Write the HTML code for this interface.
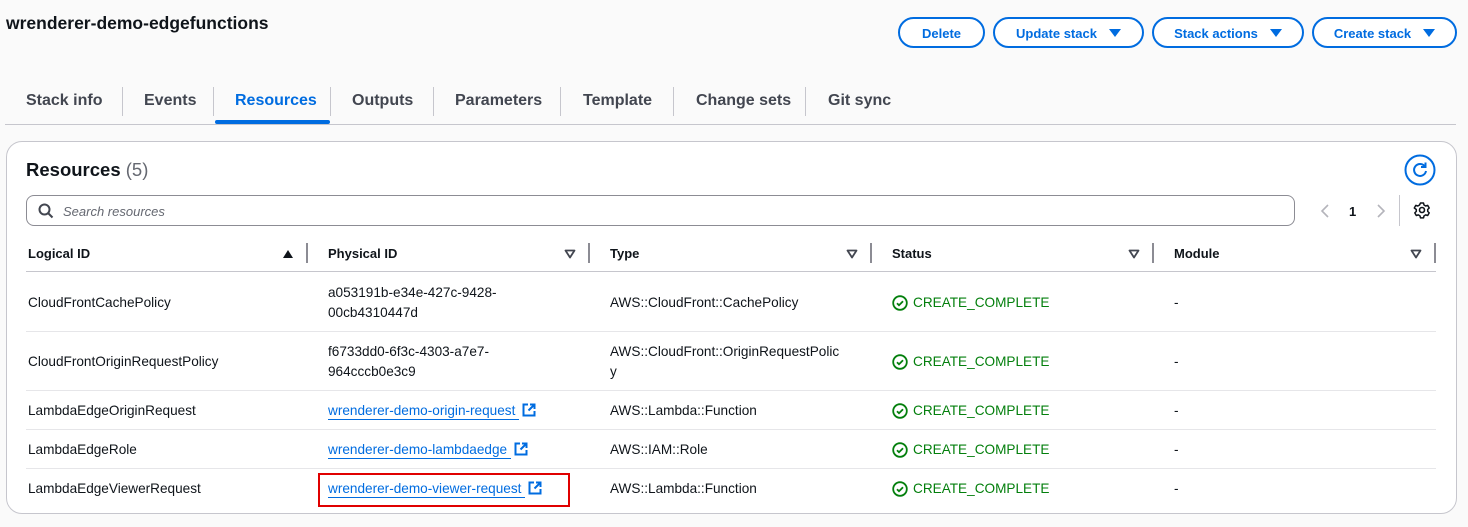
<!DOCTYPE html>
<html><head><meta charset="utf-8"><style>
*{box-sizing:border-box;margin:0;padding:0}
body{width:1468px;height:527px;background:#fafafa;font-family:"Liberation Sans",sans-serif;color:#0f141a;position:relative;overflow:hidden}
.a{position:absolute;white-space:nowrap}
.btn{position:absolute;top:17px;height:31px;border:2px solid #006ce0;border-radius:16px;color:#006ce0;font-weight:bold;font-size:13px;display:flex;align-items:center;justify-content:center;gap:12px;background:#fff;padding-top:1px}
.tri{width:0;height:0;border-left:6px solid transparent;border-right:6px solid transparent;border-top:8px solid #006ce0}
.tab{position:absolute;top:92px;font-size:16px;font-weight:bold;color:#424650}
.tsep{position:absolute;top:87px;width:1px;height:29px;background:#c6c6cd}
.th{position:absolute;top:246px;font-size:13px;font-weight:bold;color:#0f141a}
.hsep{position:absolute;top:243px;width:2px;height:20px;background:#8c8c94}
.sort{position:absolute;top:249px}
.td{position:absolute;font-size:13.6px;color:#0f141a;line-height:20px}
.rl{position:absolute;left:26px;width:1410px;height:1px;background:#e6e6e9}
.lnk{color:#006ce0;border-bottom:1px solid #006ce0;padding-bottom:1px}
.ok{color:#037f0c;display:flex;align-items:center;gap:5px}
.ext{vertical-align:-2px;margin-left:3px}
</style></head><body>
<div class="a" style="left:6px;top:13px;font-size:17.5px;font-weight:bold">wrenderer-demo-edgefunctions</div>
<div class="btn" style="left:898px;width:87px">Delete</div>
<div class="btn" style="left:993px;width:151px">Update stack<span class="tri"></span></div>
<div class="btn" style="left:1152px;width:152px">Stack actions<span class="tri"></span></div>
<div class="btn" style="left:1312px;width:145px">Create stack<span class="tri"></span></div>

<div class="tab" style="left:26px">Stack info</div>
<div class="tsep" style="left:122px"></div>
<div class="tab" style="left:144px">Events</div>
<div class="tsep" style="left:213px"></div>
<div class="tab" style="left:235px;color:#006ce0">Resources</div>
<div class="tsep" style="left:330px"></div>
<div class="tab" style="left:352px">Outputs</div>
<div class="tsep" style="left:433px"></div>
<div class="tab" style="left:455px">Parameters</div>
<div class="tsep" style="left:560px"></div>
<div class="tab" style="left:583px">Template</div>
<div class="tsep" style="left:673px"></div>
<div class="tab" style="left:696px">Change sets</div>
<div class="tsep" style="left:805px"></div>
<div class="tab" style="left:828px">Git sync</div>
<div class="a" style="left:215px;top:120px;width:115px;height:4px;border-radius:2px;background:#006ce0"></div>
<div class="a" style="left:5px;top:124px;width:1451px;height:1px;background:#c6c6cd"></div>

<div class="a" style="left:6px;top:141px;width:1451px;height:373px;background:#fff;border:1px solid #c6c6cd;border-radius:16px"></div>
<div class="a" style="left:26px;top:159px;font-size:18.5px;font-weight:bold">Resources <span style="font-weight:normal;color:#656871">(5)</span></div>
<svg class="a" style="left:1404px;top:154px" width="32" height="32" viewBox="0 0 32 32"><circle cx="16" cy="16" r="14.5" fill="none" stroke="#006ce0" stroke-width="2"/><path d="M21 12.5A6 6 0 1 0 22 17" fill="none" stroke="#006ce0" stroke-width="2"/><path d="M21.5 8.5v4.5h-4.5" fill="none" stroke="#006ce0" stroke-width="2"/></svg>
<div class="a" style="left:26px;top:195px;width:1269px;height:31px;border:1px solid #8c8c94;border-radius:8px;background:#fff"></div>
<svg class="a" style="left:38px;top:203px" width="16" height="16" viewBox="0 0 16 16"><circle cx="6.5" cy="6.5" r="5" fill="none" stroke="#424650" stroke-width="2"/><path d="M10 10l4.5 4.5" stroke="#424650" stroke-width="2"/></svg>
<div class="a" style="left:63px;top:204px;font-size:13px;font-style:italic;color:#656871">Search resources</div>
<svg class="a" style="left:1319px;top:203px" width="12" height="16"><path d="M9 2L3 8l6 6" fill="none" stroke="#b4b4bb" stroke-width="1.6"/></svg>
<div class="a" style="left:1349px;top:204px;font-size:13px;font-weight:bold">1</div>
<svg class="a" style="left:1375px;top:203px" width="12" height="16"><path d="M3 2l6 6-6 6" fill="none" stroke="#b4b4bb" stroke-width="1.6"/></svg>
<div class="a" style="left:1399px;top:195px;width:1px;height:31px;background:#c6c6cd"></div>
<svg class="a" style="left:1413px;top:201px" width="18" height="18" viewBox="0 0 18 18"><circle cx="9" cy="9" r="2.5" fill="none" stroke="#0f141a" stroke-width="1.6"/><path d="M7.5 2h3l.5 2 1.7 1 2-.6 1.5 2.6-1.5 1.5v1.9l1.5 1.5-1.5 2.6-2-.6-1.7 1-.5 2h-3l-.5-2-1.7-1-2 .6-1.5-2.6 1.5-1.5V8.5L1.3 7 2.8 4.4l2 .6L6.5 4z" fill="none" stroke="#0f141a" stroke-width="1.5" stroke-linejoin="round"/></svg>

<div class="th" style="left:28px">Logical ID</div>
<svg class="sort" style="left:282px" width="12" height="10"><path d="M1 9h10L6 1z" fill="#0f141a"/></svg>
<div class="hsep" style="left:306px"></div>
<div class="th" style="left:328px">Physical ID</div>
<svg class="sort" style="left:564px" width="12" height="10"><path d="M1.5 1.5h9L6 8.5z" fill="none" stroke="#424650" stroke-width="1.8" stroke-linejoin="round"/></svg>
<div class="hsep" style="left:588px"></div>
<div class="th" style="left:610px">Type</div>
<svg class="sort" style="left:846px" width="12" height="10"><path d="M1.5 1.5h9L6 8.5z" fill="none" stroke="#424650" stroke-width="1.8" stroke-linejoin="round"/></svg>
<div class="hsep" style="left:870px"></div>
<div class="th" style="left:892px">Status</div>
<svg class="sort" style="left:1128px" width="12" height="10"><path d="M1.5 1.5h9L6 8.5z" fill="none" stroke="#424650" stroke-width="1.8" stroke-linejoin="round"/></svg>
<div class="hsep" style="left:1152px"></div>
<div class="th" style="left:1174px">Module</div>
<svg class="sort" style="left:1410px" width="12" height="10"><path d="M1.5 1.5h9L6 8.5z" fill="none" stroke="#424650" stroke-width="1.8" stroke-linejoin="round"/></svg>
<div class="hsep" style="left:1434px"></div>
<div class="rl" style="top:271px;background:#c6c6cd"></div>

<div class="td" style="left:28px;top:293px">CloudFrontCachePolicy</div>
<div class="td" style="left:328px;top:283px">a053191b-e34e-427c-9428-<br>00cb4310447d</div>
<div class="td" style="left:610px;top:293px">AWS::CloudFront::CachePolicy</div>
<div class="td ok" style="left:892px;top:293px"><svg width="16" height="16" viewBox="0 0 16 16"><circle cx="8" cy="8" r="6.8" fill="none" stroke="#037f0c" stroke-width="1.8"/><path d="M5 8.2l2 2 4-4" fill="none" stroke="#037f0c" stroke-width="1.8"/></svg>CREATE_COMPLETE</div>
<div class="td" style="left:1174px;top:293px">-</div>
<div class="rl" style="top:331px"></div>

<div class="td" style="left:28px;top:352px">CloudFrontOriginRequestPolicy</div>
<div class="td" style="left:328px;top:342px">f6733dd0-6f3c-4303-a7e7-<br>964cccb0e3c9</div>
<div class="td" style="left:610px;top:342px">AWS::CloudFront::OriginRequestPolic<br>y</div>
<div class="td ok" style="left:892px;top:352px"><svg width="16" height="16" viewBox="0 0 16 16"><circle cx="8" cy="8" r="6.8" fill="none" stroke="#037f0c" stroke-width="1.8"/><path d="M5 8.2l2 2 4-4" fill="none" stroke="#037f0c" stroke-width="1.8"/></svg>CREATE_COMPLETE</div>
<div class="td" style="left:1174px;top:352px">-</div>
<div class="rl" style="top:390px"></div>

<div class="td" style="left:28px;top:401px">LambdaEdgeOriginRequest</div>
<div class="td" style="left:328px;top:401px"><span class="lnk">wrenderer-demo-origin-request </span><svg class="ext" width="14" height="14" viewBox="0 0 14 14"><path d="M6 1.5H1.5v11h11V8M8 1.5h4.5V6M12.5 1.5L6.5 7.5" fill="none" stroke="#006ce0" stroke-width="2"/></svg></div>
<div class="td" style="left:610px;top:401px">AWS::Lambda::Function</div>
<div class="td ok" style="left:892px;top:401px"><svg width="16" height="16" viewBox="0 0 16 16"><circle cx="8" cy="8" r="6.8" fill="none" stroke="#037f0c" stroke-width="1.8"/><path d="M5 8.2l2 2 4-4" fill="none" stroke="#037f0c" stroke-width="1.8"/></svg>CREATE_COMPLETE</div>
<div class="td" style="left:1174px;top:401px">-</div>
<div class="rl" style="top:429px"></div>

<div class="td" style="left:28px;top:440px">LambdaEdgeRole</div>
<div class="td" style="left:328px;top:440px"><span class="lnk">wrenderer-demo-lambdaedge </span><svg class="ext" width="14" height="14" viewBox="0 0 14 14"><path d="M6 1.5H1.5v11h11V8M8 1.5h4.5V6M12.5 1.5L6.5 7.5" fill="none" stroke="#006ce0" stroke-width="2"/></svg></div>
<div class="td" style="left:610px;top:440px">AWS::IAM::Role</div>
<div class="td ok" style="left:892px;top:440px"><svg width="16" height="16" viewBox="0 0 16 16"><circle cx="8" cy="8" r="6.8" fill="none" stroke="#037f0c" stroke-width="1.8"/><path d="M5 8.2l2 2 4-4" fill="none" stroke="#037f0c" stroke-width="1.8"/></svg>CREATE_COMPLETE</div>
<div class="td" style="left:1174px;top:440px">-</div>
<div class="rl" style="top:468px"></div>

<div class="td" style="left:28px;top:479px">LambdaEdgeViewerRequest</div>
<div class="td" style="left:328px;top:479px"><span class="lnk">wrenderer-demo-viewer-request </span><svg class="ext" width="14" height="14" viewBox="0 0 14 14"><path d="M6 1.5H1.5v11h11V8M8 1.5h4.5V6M12.5 1.5L6.5 7.5" fill="none" stroke="#006ce0" stroke-width="2"/></svg></div>
<div class="a" style="left:318px;top:473px;width:252px;height:34px;border:2px solid #e00000"></div>
<div class="td" style="left:610px;top:479px">AWS::Lambda::Function</div>
<div class="td ok" style="left:892px;top:479px"><svg width="16" height="16" viewBox="0 0 16 16"><circle cx="8" cy="8" r="6.8" fill="none" stroke="#037f0c" stroke-width="1.8"/><path d="M5 8.2l2 2 4-4" fill="none" stroke="#037f0c" stroke-width="1.8"/></svg>CREATE_COMPLETE</div>
<div class="td" style="left:1174px;top:479px">-</div>
</body></html>
